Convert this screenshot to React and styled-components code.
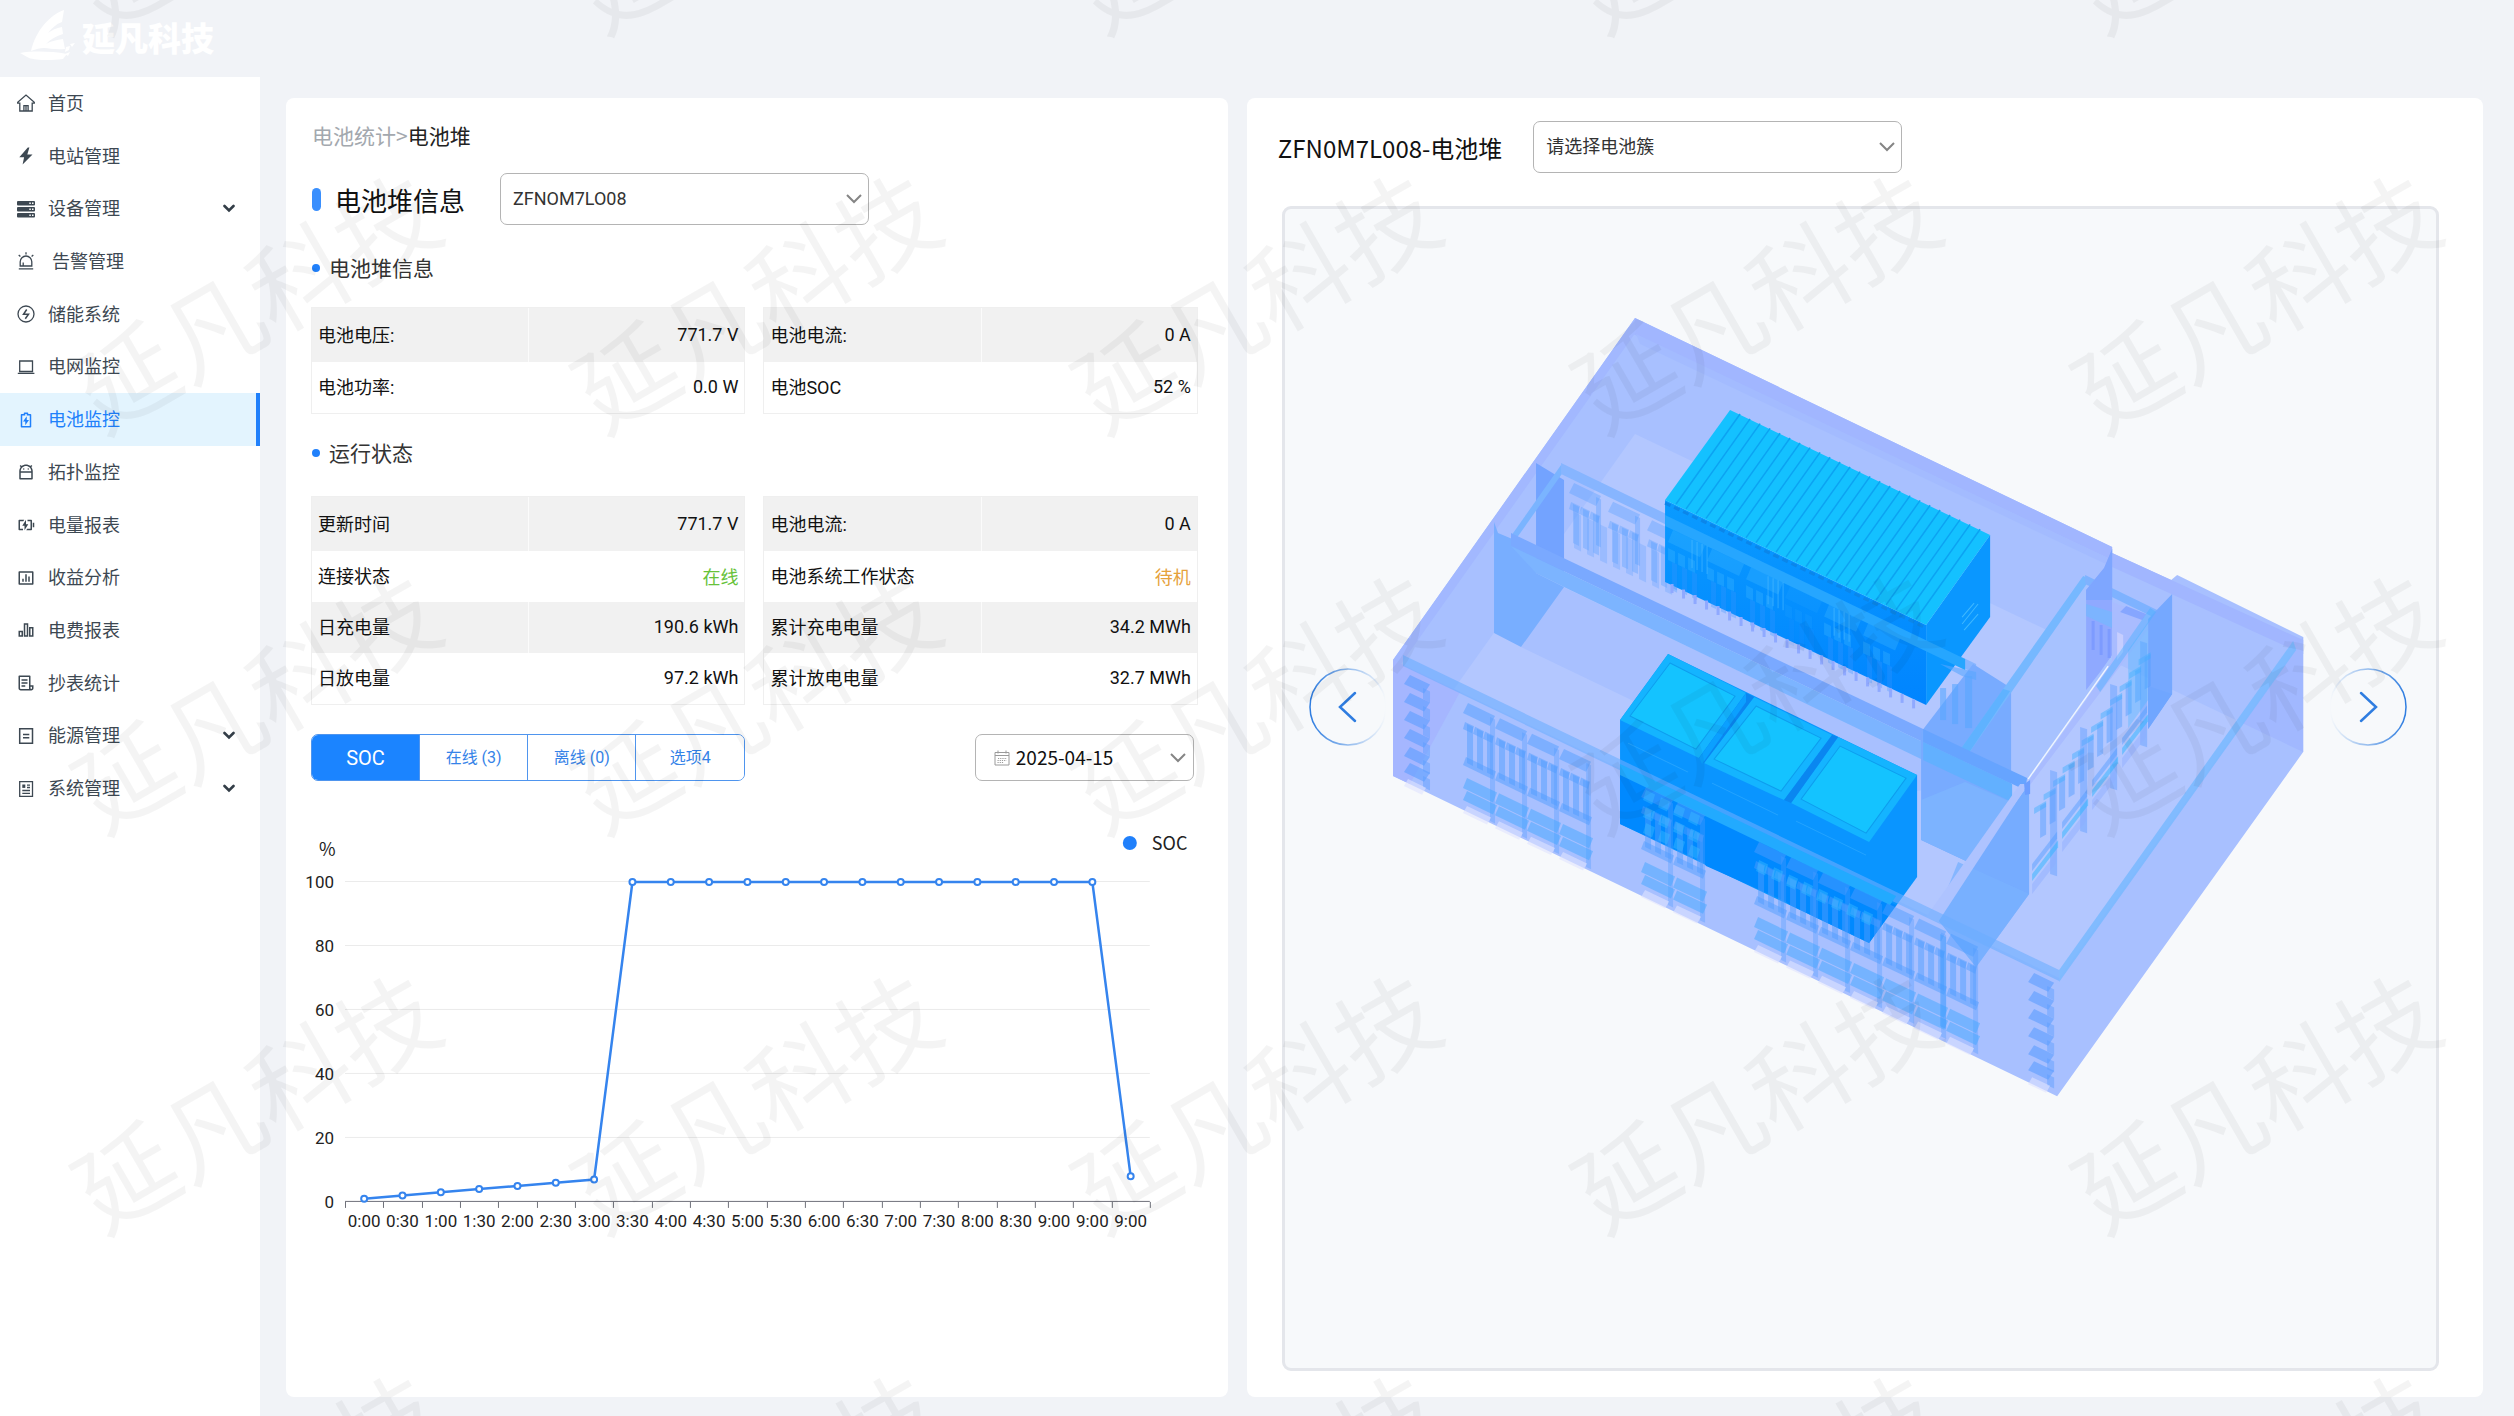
import React from 'react';
import styled, { createGlobalStyle } from 'styled-components';
import {
  RiAndroidLine,
  RiBarChart2Line,
  RiBarChartBoxLine,
  RiBattery2ChargeLine,
  RiBatteryChargeLine,
  RiFileList3Line,
} from 'react-icons/ri';

const CJK = '"Noto Sans CJK SC", sans-serif';
const BLUE = '#2080fb';

const GlobalStyle = createGlobalStyle`
  * {
    box-sizing: border-box;
  }
  body {
    margin: 0;
    background: #f1f3f7;
    font-family: Roboto, ${CJK};
    font-size: 18px;
    color: #111;
  }
  button, select {
    font-family: inherit;
    font-size: inherit;
  }
`

const Page = styled.div`
  position: relative;
  display: grid;
  grid-template-columns: 260px 1fr;
  grid-template-rows: 77px 1fr;
  min-height: 100vh;
  overflow: hidden;
`

const Header = styled.header`
  grid-column: 1 / -1;
  display: flex;
  align-items: center;
  padding: 0 20px 3px;
`

const Brand = styled.a`
  display: flex;
  align-items: center;
  gap: 7px;
  color: #fff;
  font-family: ${CJK};
  font-size: 33px;
  font-weight: 900;
  text-decoration: none;
`

const Sidebar = styled.nav`
  background: #fff;
`

const Menu = styled.ul`
  display: grid;
  grid-auto-rows: 1fr;
  height: 738px;
  margin: 0;
  padding: 0;
  list-style: none;
`

const MenuLink = styled.a`
  display: flex;
  align-items: center;
  height: 100%;
  padding: 0 21px 0 17px;
  border-right: 4px solid ${props => props.$active ? BLUE : 'transparent'};
  background: ${props => props.$active ? '#e3f4fe' : 'none'};
  color: ${props => props.$active ? BLUE : '#3d4852'};
  font-family: ${CJK};
  text-decoration: none;
  white-space: pre;

  span {
    flex: 1;
    padding: 0 0 3px 13px;
  }
`

const Main = styled.main`
  display: grid;
  grid-template-columns: 16fr 21fr;
  gap: 19px;
  padding: 21px 31px 19px 26px;
`

const Card = styled.section`
  display: flex;
  flex-direction: column;
  background: #fff;
  border-radius: 8px;
  min-width: 0;
`

const InfoCard = styled(Card)`
  padding: 24px 30px 24px 25px;
`

const ViewCard = styled(Card)`
  padding: 23px 44px 26px 31px;
`

const Crumbs = styled.div`
  padding: 0 0 3px 1px;
  font-family: ${CJK};
  font-size: 21px;
  line-height: 27px;
  color: #222;

  a {
    color: #a3a8ae;
    text-decoration: none;
  }
`

const HeadRow = styled.div`
  display: flex;
  align-items: center;
  gap: 31px;
`

const InfoHead = styled(HeadRow)`
  margin: 21px 0 4px;
  gap: 35px;
`

const HeadLabel = styled.label`
  font-family: ${CJK};
  font-size: 24px;
`

const BarLabel = styled(HeadLabel)`
  display: flex;
  align-items: center;
  gap: 14px;
  font-size: 26px;

  &::before {
    content: '';
    width: 9px;
    height: 23px;
    margin-left: 1px;
    border-radius: 5px;
    background: #3a8ffd;
  }
`

const SelectBox = styled.div`
  position: relative;
  width: ${props => props.$small ? '219px' : '369px'};
  height: ${props => props.$small ? '47px' : '52px'};

  svg {
    position: absolute;
    top: 50%;
    transform: translateY(-50%);
    pointer-events: none;
  }
  svg:last-child {
    right: ${props => props.$small ? '8px' : '7px'};
  }
  svg:not(:last-child) {
    left: 19px;
  }
`

const Select = styled.select`
  appearance: none;
  width: 100%;
  height: 100%;
  padding: 0 36px 2px ${props => props.$icon ? '40px' : '12px'};
  border: 1px solid #b4b4b4;
  border-radius: 7px;
  background: #fff;
  color: ${props => props.$icon ? '#111' : '#333'};
  font-family: ${props => props.$icon ? CJK : 'inherit'};
  font-size: ${props => props.$icon ? '19px' : '18px'};
`

const SectionTitle = styled.h2`
  display: flex;
  align-items: center;
  gap: 9px;
  margin: 24px 0 ${props => props.$gap || '24px'};
  padding-bottom: 2px;
  font-family: ${CJK};
  font-size: 21px;
  font-weight: 400;
  line-height: 28px;
  color: #333;

  &::before {
    content: '';
    width: 8px;
    height: 8px;
    margin: 2px 0 0 1px;
    border-radius: 50%;
    background: ${BLUE};
  }
`

const Columns = styled.div`
  display: grid;
  grid-template-columns: 1fr 1fr;
  gap: 18px;
`

const Table = styled.table`
  width: 100%;
  border: 1px solid #efefef;
  border-spacing: 0;
  table-layout: fixed;

  tr {
    height: 51px;
  }
  tr:first-child {
    height: 54px;
  }
  tr:nth-child(odd) {
    background: #f1f1f1;
  }
  tr:nth-child(odd) td {
    border-left: 1px solid #fbfbfb;
  }
  th {
    padding: 0 6px 3px;
    font-weight: 400;
    text-align: left;
  }
  td {
    padding: 0 6px 2px;
    text-align: right;
  }
`

const Status = styled.span`
  color: ${props => props.$color};
`

const Toolbar = styled(Columns)`
  margin-top: 29px;
`

const Tabs = styled.div`
  display: grid;
  grid-template-columns: repeat(4, 1fr);
  height: 47px;
  border: 1px solid #4f95ee;
  border-radius: 7px;
  overflow: hidden;
`

const Tab = styled.button`
  padding: 0 0 ${props => props.$active ? '0' : '3px'};
  border: 0;
  border-right: 1px solid #4f95ee;
  background: ${props => props.$active ? '#1b84ff' : '#fff'};
  color: ${props => props.$active ? '#fff' : '#3583e8'};
  font-size: ${props => props.$active ? '20px' : '16px'};

  &:last-child {
    border-right: 0;
  }
`

const DateSlot = styled.div`
  display: flex;
  justify-content: flex-end;
  padding-right: 4px;
`

const ChartSvg = styled.svg`
  display: block;
  width: calc(100% + 8px);
  margin: 19px 0 0 -8px;

  text {
    font-family: Roboto, sans-serif;
    font-size: 17px;
    fill: #222;
  }
  .name {
    font-family: ${CJK};
    font-size: 18px;
  }
`

const Viewer = styled.div`
  flex: 1;
  margin: 33px 0 0 4px;
  padding: 107px 29px 0 24px;
  border: 3px solid #e4e6eb;
  border-radius: 9px;
  background: #f7f9fb;
`

const Stage = styled.div`
  display: flex;
  align-items: center;
`

const Scene = styled.svg`
  flex: 1;
  min-width: 0;
`

const ArrowButton = styled.button`
  flex: none;
  display: flex;
  padding: 0;
  border: 0;
  background: none;
`

const Watermarks = styled.div`
  position: absolute;
  top: -302px;
  left: 4px;
  display: grid;
  grid-template-columns: repeat(5, 500px);
  grid-auto-rows: 400px;
  place-items: center;
  color: rgba(0, 0, 0, 0.045);
  font-family: ${CJK};
  font-size: 100px;
  line-height: 100px;
  white-space: nowrap;
  pointer-events: none;
  user-select: none;

  span {
    transform: rotate(-30deg);
  }
`

/* ---------- icons ---------- */

const Icon = ({ children, ...rest }) => (
  <svg width="18" height="18" viewBox="0 0 18 18" fill="none" stroke="currentColor" strokeWidth="1.3" {...rest}>
    {children}
  </svg>
)

const HomeIcon = () => (
  <Icon><path d="M.7 9.2V8.2L9 1l8.300 7.200v1h-2.100v7.800H2.800V9.200zM6.900 17v-5.400h4.200V17M9 12v5" /></Icon>
)

const BoltIcon = () => (
  <Icon fill="currentColor" stroke="none"><path d="M10.800.5 2.300 10.200h4.800L5.600 17.600 15.500 7.400h-5.200L12.400.5z" /></Icon>
)

const ServerIcon = () => (
  <Icon stroke="none" fill="currentColor">
    {[1, 7, 13].map(y => (
      <g key={y}>
        <rect x="0" y={y} width="18" height="4.600" rx="1" />
        <rect x="12.300" y={y + 1.500} width="1.500" height="1.500" fill="#fff" />
        <rect x="15" y={y + 1.500} width="1.500" height="1.500" fill="#fff" />
      </g>
    ))}
  </Icon>
)

const AlarmIcon = () => (
  <Icon>
    <path d="M3.200 14V9.800a5.800 5.800 0 0 1 11.600 0V14zM1.800 16.800h14.400M6.200 14v-3.500M9 .3v2.200M1.700 3l1.700 1.500M16.300 3l-1.700 1.500" />
  </Icon>
)

const StorageIcon = () => (
  <Icon><circle cx="9" cy="9" r="8" /><path d="M9.700 4.500 6.500 9.300h5L8.300 13.800" strokeWidth="1.500" /></Icon>
)

const LaptopIcon = () => (
  <Icon><path d="M2.700 3h12.800v10.500H2.700zM.8 15.300h16.600" /></Icon>
)

const EnergyIcon = () => (
  <Icon strokeWidth="1.500"><path d="M2.700 1.700h12.800v14.600H2.700zM6 7.500h6.300M6 10.700h6.300" /></Icon>
)

const SystemIcon = () => (
  <Icon strokeWidth="1.300">
    <path d="M2.700 1.700h12.800v14.600H2.700zM10 5.200h3M10 7.500h3M5.300 10.500h7.700M5.300 13.300h7.700" />
    <rect x="5.300" y="4.500" width="3" height="3.400" fill="currentColor" stroke="none" />
  </Icon>
)

const CalendarIcon = () => (
  <svg width="16" height="16" viewBox="0 0 16 16" fill="none" stroke="#9a9a9a">
    <path d="M1 2.500h14v12.500H1zM1 5.500h14M4 .5v3M12 .5v3" />
    <path d="M4 8.500h9M3.500 10.500h9M3.500 12.500h6" strokeDasharray="1.200 1" />
  </svg>
)

const MenuChevron = () => (
  <svg width="12" height="9" viewBox="0 0 12 9" fill="none" stroke="#333d47" strokeWidth="2.600" strokeLinecap="round">
    <path d="M1.500 2 6 6.500 10.500 2" />
  </svg>
)

const SelectChevron = () => (
  <svg width="16" height="10" viewBox="0 0 16 10" fill="none" stroke="#858585" strokeWidth="2">
    <path d="M1 1l7 7 7-7" />
  </svg>
)

const Sail = () => (
  <svg width="55" height="54" viewBox="0 0 55 54" fill="#fff">
    <path d="M44 0C30 5 16 20 11 41c5-2 9-3 13-3 5 0 11 2 21 1L43 29c-6 1-12 2-17 5 5-5 10-8 17-10L42 17c-6 1-10 3-14 6 4-5 8-9 14-11z" />
    <path d="M0 43c12-2 30-2 47 1l-4 5c-14 2-28 1-34-1z" />
    <path d="M46 37l4-1-1 4-4 2zM50 34l5-1-3 4zM45 44l5-2-2 4z" />
  </svg>
)

const Arrow = ({ id, flip }) => (
  <svg width="78" height="78" viewBox="0 0 78 78" fill="none" transform={flip ? 'scale(-1 1)' : undefined}>
    <defs>
      <linearGradient id={id}>
        <stop offset="0" stopColor="#2f7de0" stopOpacity="0" />
        <stop offset="1" stopColor="#2f7de0" />
      </linearGradient>
    </defs>
    <circle cx="39" cy="39" r="38" stroke={`url(#${id})`} strokeWidth="1.500" />
    <path d="M32 25l15 14-15 14" stroke="#2f7de0" strokeWidth="2.500" strokeLinecap="round" />
  </svg>
)

/* ---------- data ---------- */

const menu = [
  { text: '首页', icon: <HomeIcon /> },
  { text: '电站管理', icon: <BoltIcon /> },
  { text: '设备管理', icon: <ServerIcon />, more: true },
  { text: ' 告警管理', icon: <AlarmIcon /> },
  { text: '储能系统', icon: <StorageIcon /> },
  { text: '电网监控', icon: <LaptopIcon /> },
  { text: '电池监控', icon: <RiBattery2ChargeLine />, active: true },
  { text: '拓扑监控', icon: <RiAndroidLine /> },
  { text: '电量报表', icon: <RiBatteryChargeLine /> },
  { text: '收益分析', icon: <RiBarChartBoxLine /> },
  { text: '电费报表', icon: <RiBarChart2Line /> },
  { text: '抄表统计', icon: <RiFileList3Line /> },
  { text: '能源管理', icon: <EnergyIcon />, more: true },
  { text: '系统管理', icon: <SystemIcon />, more: true },
]

const stackInfo = [
  [['电池电压:', '771.7 V'], ['电池功率:', '0.0 W']],
  [['电池电流:', '0 A'], ['电池SOC', '52 %']],
]

const runInfo = [
  [
    ['更新时间', '771.7 V'],
    ['连接状态', <Status $color="#67c23a">在线</Status>],
    ['日充电量', '190.6 kWh'],
    ['日放电量', '97.2 kWh'],
  ],
  [
    ['电池电流:', '0 A'],
    ['电池系统工作状态', <Status $color="#e6a23c">待机</Status>],
    ['累计充电电量', '34.2 MWh'],
    ['累计放电电量', '32.7 MWh'],
  ],
]

const times = [
  '0:00', '0:30', '1:00', '1:30', '2:00', '2:30', '3:00', '3:30', '4:00', '4:30', '5:00',
  '5:30', '6:00', '6:30', '7:00', '7:30', '8:00', '8:30', '9:00', '9:00', '9:00',
]
const soc = [1, 2, 3, 4, 5, 6, 7, ...Array(13).fill(100), 8]

/* ---------- parts ---------- */

const InfoTables = ({ tables }) => (
  <Columns>
    {tables.map((rows, i) => (
      <Table key={i}>
        <tbody>
          {rows.map(([name, value]) => (
            <tr key={name}>
              <th scope="row">{name}</th>
              <td>{value}</td>
            </tr>
          ))}
        </tbody>
      </Table>
    ))}
  </Columns>
)

const SocChart = () => {
  const left = 34
  const right = 839
  const bottom = 402
  const step = (right - left) / times.length
  const px = i => left + step * (i + 0.5)
  const py = v => bottom - v * 3.2

  return (
    <ChartSvg viewBox="-8 0 895 440">
      <text className="name" x="8" y="56">%</text>
      <circle cx="819" cy="43" r="7" fill={BLUE} />
      <text className="name" x="841" y="50">SOC</text>
      {[0, 20, 40, 60, 80, 100].map(v => (
        <g key={v}>
          {v > 0 && <path d={`M${left} ${py(v) - 0.5}H${right}`} stroke="#ebebeb" />}
          <text x="23" y={py(v) + 6} textAnchor="end">{v}</text>
        </g>
      ))}
      <path d={`M${left} ${bottom - 0.5}H${right}`} stroke="#6e7079" />
      {[...times, ''].map((t, i) => (
        <path key={i} d={`M${Math.round(left + step * i) + 0.5} ${bottom}v6`} stroke="#6e7079" />
      ))}
      {times.map((t, i) => (
        <text key={i} x={px(i)} y="427" textAnchor="middle">{t}</text>
      ))}
      <polyline points={soc.map((v, i) => `${px(i)},${py(v)}`).join(' ')} fill="none" stroke="#3584ee" strokeWidth="2.500" />
      {soc.map((v, i) => (
        <circle key={i} cx={px(i)} cy={py(v)} r="3" fill="#fff" stroke="#3584ee" strokeWidth="2" />
      ))}
    </ChartSvg>
  )
}

// slope of every wall that runs parallel to the front of the building
const SLOPE = 0.4775

const Slab = ({ x, y, w, h, k = SLOPE, skew = 0, ...rest }) => (
  <polygon points={`${x + skew},${y} ${x + w + skew},${y + w * k} ${x + w},${y + w * k + h} ${x},${y + h}`} {...rest} />
)

const Window = ({ x, y, lower = true, faint = false }) => (
  <g fill="#4f9cff" fillOpacity={faint ? 0.340 : 0.480}>
    <Slab x={x} y={y} w={27} h={10} skew={5} />
    {[0, 10, 20].map(d => (
      <g key={d}>
        <Slab x={x + d} y={y + 19 + d * SLOPE} w={9} h={7} skew={2} />
        <Slab x={x + d + 4} y={y + 21 + d * SLOPE} w={6} h={39} />
      </g>
    ))}
    <Slab x={x + 27} y={y + 14} w={5} h={lower ? 104 : 48} fillOpacity="0.350" />
    {lower && (
      <>
        <Slab x={x} y={y + 54} w={30} h={8} skew={3} />
        <Slab x={x} y={y + 75} w={30} h={10} skew={4} fill="#3ea6ff" />
        <Slab x={x} y={y + 88} w={30} h={9} skew={4} fill="#3ea6ff" />
        <Slab x={x} y={y + 103} w={24} h={7} skew={4} fill="#dfe2ff" fillOpacity="0.600" />
      </>
    )}
  </g>
)

const Shutters = ({ x, y }) => (
  <g fill="#5b9dff" fillOpacity="0.600">
    {[0, 18, 36, 54, 72, 88].map(d => (
      <g key={d}>
        <Slab x={x} y={y + d} w={20} h={9} skew={6} />
        <Slab x={x + 19} y={y + d + 13} w={7} h={11} fillOpacity="0.450" />
      </g>
    ))}
    <Slab x={x} y={y + 104} w={18} h={7} skew={4} fill="#dfe2ff" />
  </g>
)

const row = (count, x, y, dx, render) =>
  Array.from({ length: count }, (_, i) => render(x + dx * i, y + dx * i * SLOPE, i))

const Building = () => (
  <Scene viewBox="1387 316 942 782" role="img" aria-label="电池堆">
    <defs>
      <linearGradient id="side" x1="0" y1="0" x2="0" y2="1">
        <stop offset="0" stopColor="#0a9bff" />
        <stop offset="1" stopColor="#0084ff" />
      </linearGradient>
    </defs>

    {/* shell */}
    <polygon points="1635,318 2112,547 2112,553 2171,580 2177,575 2303,637 2303,752 2057,1096 1393,776 1393,660" fill="#a8c0ff" />
    <polygon points="1454,689 1635,434 2242,723 2059,978" fill="#b3c7ff" />
    <polygon points="1635,318 2112,547 2112,560 1633,334" fill="#a1b6ff" />
    <polygon points="1636,334 2112,560 2112,567 1640,344" fill="#a3bbff" />
    <polygon points="2112,553 2303,640 2303,654 2112,567" fill="#a1b6ff" />
    <polygon points="1635,318 1393,660 1401,664 1636,332" fill="#a2b8ff" />
    <polygon points="1393,660 1460,692 1410,784 1393,776" fill="#a5b6ff" />
    <polygon points="2303,752 2242,723 2303,637" fill="#a1b8ff" />

    {/* left rooms */}
    <polygon points="1521,647 1563,587 1925,760 1925,790 1840,800" fill="#a8c0ff" />
    <polygon points="1536,463 1564,480 1564,585 1536,573" fill="#73a3ff" />
    <polygon points="1494,522 1498,533 1536,549 1536,573 1564,587 1521,647 1494,633" fill="#78aeff" />
    <polygon points="1561,465 1511,536 1516,539 1566,468" fill="#7ab4ff" />
    <polygon points="1511,533 1923,729 1923,742 1511,546" fill="#7aa9ff" />
    <polygon points="1511,546 1923,742 1923,760 1564,587 1536,573" fill="#7cb4ff" />
    <polygon points="1561,463 1976,664 1976,674 1561,474" fill="#87b5ff" />
    {row(3, 1569, 483, 39, (x, y, i) => <Window key={i} x={x} y={y} lower={false} faint />)}
    {row(8, 1574, 512, 13, (x, y, i) => (
      <Slab key={i} x={x} y={y} w={7} h={36} fill="#6ea6ff" fillOpacity="0.350" />
    ))}

    {/* right rooms */}
    <polygon points="2011,688 2086,584 2112,600 2112,660 2029,780 2011,772" fill="#a7c2ff" />
    <polygon points="1921,732 1973,664 2011,688 2011,802 1968,862 1921,840" fill="#78abff" />
    <polygon points="1921,840 1921,800 1965,782 2011,802 1968,862" fill="#7cb3ff" />
    <polygon points="1955,757 2083,576 2090,579 1962,763" fill="#76b8ff" />
    <polygon points="1955,757 2003,689 2010,691 1962,763" fill="#5fb2ff" />
    <polygon points="2085,575 2157,610 2157,619 2085,584" fill="#7eb2ff" />
    <polygon points="2086,590 2104,568 2112,549 2112,655 2100,672 2086,690" fill="#8fa9ff" />
    <polygon points="2086,590 2104,568 2112,549 2112,600 2086,600" fill="#7ea6ff" />
    <polygon points="2086,604 2112,612 2112,628 2086,616" fill="#7cb4ff" />
    <path d="M2093 621v29M2101 625v30M2109 629v29" stroke="#7d9bff" strokeWidth="3" />
    <polygon points="2112,602 2156,619 2029,786 2029,780 2086,700 2112,660" fill="#a9bcff" />
    <polygon points="2126,606 2146,614 2142,620 2120,612" fill="#86a6ff" />
    <polygon points="2117,632 2123,635 2123,652 2117,660" fill="#c6ceff" />
    <polygon points="2172,594 2172,694 2148,729 2148,619" fill="#75a8ff" />
    <polygon points="2148,686 2172,694 2148,729" fill="#70a6ff" />
    <polygon points="1923,729 1957,745 2027,778 2025,790 1923,742" fill="#66a4ff" />
    <polygon points="1923,742 2012,784 2012,802 1923,760" fill="#62b0ff" />
    <polygon points="2029,784 2029,894 1976,967 1934,915" fill="#76acff" />
    <polygon points="2029,894 1976,967 1936,917 1958,862" fill="#79b2ff" fillOpacity="0.800" />
    <polygon points="2020,784 2028,784 1938,922 1926,917" fill="#aec3ff" />
    <polygon points="2024,784 2030,780 2030,794 2025,795" fill="#6c9dff" />
    <path d="M2108 666L2028 779" stroke="#eef4ff" strokeWidth="1.500" />

    {/* windows of the right inner wall */}
    <g fill="#4f9bff" fillOpacity="0.450">
      {Array.from({ length: 12 }, (_, i) => (
        <g key={i}>
          <Slab x={2040 + i * 9.500} y={806 - i * 13.500} w={6} h={32} k={-0.6} />
          <Slab x={2034 + i * 9.500} y={808 - i * 13.500} w={12} h={6} k={-0.6} fill="#3fb0ff" />
        </g>
      ))}
      {[0, 1, 2, 3].map(i => (
        <g key={i}>
          <Slab x={2050 + i * 30} y={770 - i * 43} w={7} h={104} k={0.3} fill="#5f9dff" />
          <Slab x={2032 + i * 30} y={864 - i * 42} w={25} h={7} k={-1.300} />
          <Slab x={2032 + i * 30} y={874 - i * 42} w={26} h={7} k={-1.300} fill="#22b4ff" />
          <Slab x={2032 + i * 30} y={884 - i * 42} w={24} h={10} k={-1.300} fill="#8facff" />
        </g>
      ))}
      <polygon points="2150,608 2156,612 2100,692 2096,686" fill="#4ab0ff" />
      <polygon points="2128,650 2148,622 2148,700 2128,728" fill="#45b4ff" fillOpacity="0.350" />
    </g>

    {/* ribbed container */}
    <polygon points="1665,500 1926,625 1926,705 1665,582" fill="url(#side)" />
    <polygon points="1926,625 1990,535 1990,617 1926,705" fill="#0a97ff" />
    <polygon points="1730,410 1990,535 1926,625 1665,500" fill="#14c1ff" />
    {Array.from({ length: 25 }, (_, i) => {
      const x = 1676 + i * 10
      const y = 504 + i * 4.8
      return <path key={i} d={`M${x} ${y}L${x + 64} ${y - 90}`} stroke="#0ca3f2" strokeWidth="1.500" />
    })}
    <path d="M1665 503L1926 628" stroke="#0b86ea" strokeWidth="3" strokeDasharray="6 4" />
    <polygon points="1665,515 1965,659 1965,670 1665,526" fill="#26a6ff" />
    <g fill="#42bbff">
      {row(6, 1668, 530, 39, (x, y, i) => (
        <g key={i} fillOpacity={i === 3 ? 0.100 : 0.300}>
          <Slab x={x} y={y} w={32} h={12} skew={5} />
          {[0, 10, 20].map(d => (
            <g key={d}>
              <Slab x={x + d} y={y + 18 + d * SLOPE} w={7} h={12} />
              <Slab x={x + d + 4} y={y + 32 + d * SLOPE} w={5} h={26} fill="#3d94ff" />
            </g>
          ))}
        </g>
      ))}
    </g>
    {[1692, 1768, 1834].map(x => (
      <path
        key={x}
        d={`M${x} ${540 + (x - 1692) * SLOPE}v28m5 -26v28m5 -26v28m5 -26v28`}
        fill="none"
        stroke="#5cc4ff"
        strokeOpacity="0.500"
      />
    ))}
    {row(22, 1672, 584, 11.500, (x, y, i) => (
      <path key={i} d={`M${x} ${y}v9`} stroke="#8fa9ff" strokeWidth="3" />
    ))}
    <path d="M1962 617l12 -14M1962 624l16 -20M1964 630l14 -16" stroke="#3fb8ff" />
    <g fill="#58a6ff" fillOpacity="0.600">
      <polygon points="1940,664 1976,672 1976,680 1962,676" />
      <rect x="1940" y="688" width="6" height="32" />
      <rect x="1952" y="684" width="6" height="40" />
      <rect x="1965" y="676" width="7" height="52" />
    </g>

    {/* battery stack */}
    <polygon points="1620,720 1668,654 1917,775 1917,877 1869,943 1620,824" fill="#0a95ff" />
    <polygon points="1620,772 1896,905 1869,943 1790,905 1785,901 1706,866 1703,862 1620,824" fill="#0089ff" />
    {[
      [1668, 654, 1746, 693, 1699, 758, 1620, 720],
      [1754, 697, 1832, 735, 1784, 800, 1704, 763],
      [1838, 737, 1917, 775, 1869, 842, 1791, 803],
    ].map(([ax, ay, bx, by, cx, cy, dx, dy]) => (
      <g key={ax}>
        <polygon points={`${ax},${ay} ${bx},${by} ${cx},${cy} ${dx},${dy}`} fill="#14b4ff" />
        <polygon
          points={`${ax + 2},${ay + 9} ${bx - 11},${by + 3} ${cx - 3},${cy - 9} ${dx + 10},${dy - 4}`}
          fill="#14c3ff"
          stroke="#0e9dee"
        />
      </g>
    ))}
    <polygon points="1746,693 1754,697 1704,763 1699,758" fill="#0a86f0" />
    <polygon points="1832,735 1838,737 1791,803 1784,800" fill="#0a86f0" />
    <polygon points="1746,693 1746,702 1702,764 1699,758" fill="#0ba0ff" />
    <path d="M1628 743l60 29M1712 783l66 32M1796 821l70 34" stroke="#25a4ff" />

    {/* front wall */}
    <polygon points="1403,655 2059,970 2059,981 1403,666" fill="#6aaeff" fillOpacity="0.600" />
    <polygon points="1620,764 1896,896 1890,905 1620,775" fill="#22aaff" />
    <polygon points="2059,970 2293,641 2296,650 2059,982" fill="#78b9ff" fillOpacity="0.850" />
    <Shutters x={1404} y={675} />
    <Shutters x={2028} y={973} />
    {row(4, 1463, 703, 32, (x, y, i) => <Window key={i} x={x} y={y} />)}
    {row(2, 1641, 787, 32, (x, y, i) => <Window key={i} x={x} y={y} />)}
    {row(7, 1754, 842, 32, (x, y, i) => <Window key={i} x={x} y={y} />)}
    <g fill="#3fc0ff" fillOpacity="0.400">
      {row(4, 1643, 790, 15, (x, y, i) => (
        <g key={i}>
          <Slab x={x} y={y} w={9} h={10} skew={3} />
          <Slab x={x} y={y + 17} w={9} h={10} skew={3} />
          <Slab x={x} y={y + 33} w={9} h={10} skew={3} />
        </g>
      ))}
      {row(8, 1756, 860, 15, (x, y, i) => <Slab key={i} x={x} y={y} w={9} h={11} skew={3} />)}
    </g>
    <Slab x={1940} y={934} w={6} h={92} fill="#3a9bff" fillOpacity="0.400" />
  </Scene>
)

const App = () => {

  return (
    <>
      <GlobalStyle />
      <Page>
        <Header>
          <Brand href="#"><Sail />延凡科技</Brand>
        </Header>

        <Sidebar>
          <Menu>
            {menu.map(item => (
              <li key={item.text}>
                <MenuLink href="#" $active={item.active}>
                  {item.icon}
                  <span>{item.text}</span>
                  {item.more && <MenuChevron />}
                </MenuLink>
              </li>
            ))}
          </Menu>
        </Sidebar>

        <Main>
          <InfoCard>
            <Crumbs><a href="#">电池统计&gt;</a>电池堆</Crumbs>
            <InfoHead>
              <BarLabel htmlFor="stack">电池堆信息</BarLabel>
              <SelectBox>
                <Select id="stack"><option>ZFNOM7LO08</option></Select>
                <SelectChevron />
              </SelectBox>
            </InfoHead>

            <SectionTitle>电池堆信息</SectionTitle>
            <InfoTables tables={stackInfo} />

            <SectionTitle $gap="28px">运行状态</SectionTitle>
            <InfoTables tables={runInfo} />

            <Toolbar>
              <Tabs>
                <Tab $active>SOC</Tab>
                <Tab>在线 (3)</Tab>
                <Tab>离线 (0)</Tab>
                <Tab>选项4</Tab>
              </Tabs>
              <DateSlot>
                <SelectBox $small>
                  <Select $icon aria-label="日期"><option>2025-04-15</option></Select>
                  <CalendarIcon />
                  <SelectChevron />
                </SelectBox>
              </DateSlot>
            </Toolbar>

            <SocChart />
          </InfoCard>

          <ViewCard>
            <HeadRow>
              <HeadLabel htmlFor="cluster">ZFN0M7L008-电池堆</HeadLabel>
              <SelectBox>
                <Select id="cluster"><option>请选择电池簇</option></Select>
                <SelectChevron />
              </SelectBox>
            </HeadRow>
            <Viewer>
              <Stage>
                <ArrowButton aria-label="上一个"><Arrow id="fadePrev" flip /></ArrowButton>
                <Building />
                <ArrowButton aria-label="下一个"><Arrow id="fadeNext" /></ArrowButton>
              </Stage>
            </Viewer>
          </ViewCard>
        </Main>

        <Watermarks aria-hidden="true">
          {Array.from({ length: 25 }, (_, i) => <span key={i}>延凡科技</span>)}
        </Watermarks>
      </Page>
    </>
  )

}

export default App;
